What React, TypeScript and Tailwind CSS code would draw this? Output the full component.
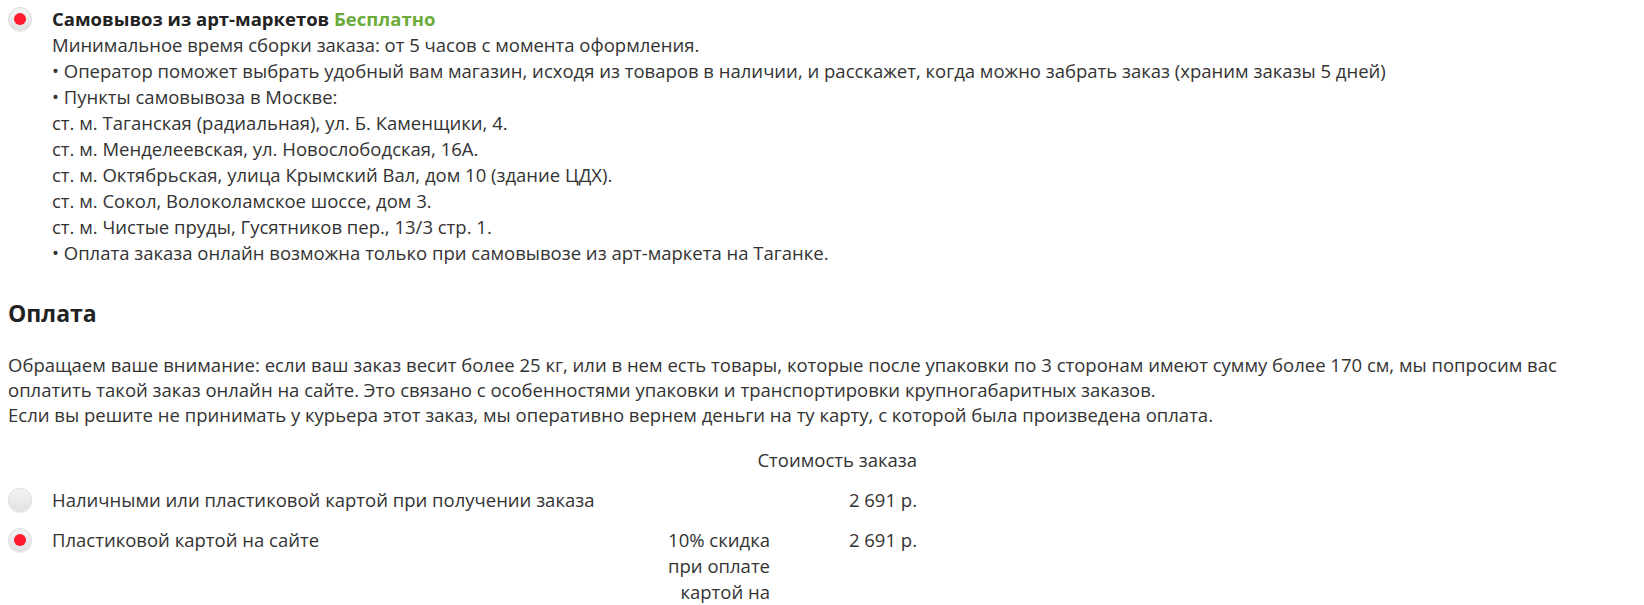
import React from "react";

const PICKUP_LINES = [
  "Минимальное время сборки заказа: от 5 часов с момента оформления.",
  "• Оператор поможет выбрать удобный вам магазин, исходя из товаров в наличии, и расскажет, когда можно забрать заказ (храним заказы 5 дней)",
  "• Пункты самовывоза в Москве:",
  "ст. м. Таганская (радиальная), ул. Б. Каменщики, 4.",
  "ст. м. Менделеевская, ул. Новослободская, 16А.",
  "ст. м. Октябрьская, улица Крымский Вал, дом 10 (здание ЦДХ).",
  "ст. м. Сокол, Волоколамское шоссе, дом 3.",
  "ст. м. Чистые пруды, Гусятников пер., 13/3 стр. 1.",
  "• Оплата заказа онлайн возможна только при самовывозе из арт-маркета на Таганке.",
];

function Radio({ checked }: { checked?: boolean }) {
  return (
    <span className="flex h-6 w-6 shrink-0 items-center justify-center rounded-full border border-[#dcdcdc] bg-gradient-to-b from-[#f4f4f4] to-[#e2e2e2] shadow-[0_1px_1px_rgba(0,0,0,0.08)]">
      {checked && <span className="h-3 w-3 rounded-full bg-[#ff1a2d]" />}
    </span>
  );
}

export default function App() {
  return (
    <div className="min-h-[605px] bg-white text-[18.5px] leading-[26px] text-[#333] font-['Open_Sans','Lato',sans-serif]">
      <div className="flex pl-2 pt-[6px]">
        <div className="w-[44px] shrink-0 pt-px">
          <Radio checked />
        </div>
        <div>
          <div className="font-bold text-[#222]">
            Самовывоз из арт-маркетов <span className="text-[#6aab3c]">Бесплатно</span>
          </div>
          {PICKUP_LINES.map((l) => (
            <div key={l}>{l}</div>
          ))}
        </div>
      </div>

      <div className="pl-2 pr-4 pt-[32px]">
        <h2 className="text-[23px] font-bold leading-[30px] text-[#222]">Оплата</h2>
        <p className="mt-[24px] leading-[25px]">
          Обращаем ваше внимание: если ваш заказ весит более 25 кг, или в нем есть товары, которые после упаковки по 3 сторонам имеют сумму более 170 см, мы попросим вас оплатить такой заказ онлайн на сайте. Это связано с особенностями упаковки и транспортировки крупногабаритных заказов.
          <br />
          Если вы решите не принимать у курьера этот заказ, мы оперативно вернем деньги на ту карту, с которой была произведена оплата.
        </p>

        <div className="mt-[13px] w-[909px]">
          <div className="py-[7px] text-right whitespace-nowrap">Стоимость заказа</div>
          <div className="flex items-start py-[7px]">
            <div className="w-[44px] shrink-0 pt-px">
              <Radio />
            </div>
            <div className="w-[614px] shrink-0">Наличными или пластиковой картой при получении заказа</div>
            <div className="w-[104px] shrink-0" />
            <div className="w-[147px] shrink-0 text-right">2 691 р.</div>
          </div>
          <div className="flex items-start py-[7px]">
            <div className="w-[44px] shrink-0 pt-px">
              <Radio checked />
            </div>
            <div className="w-[614px] shrink-0">Пластиковой картой на сайте</div>
            <div className="w-[104px] shrink-0 text-right">10% скидка при оплате картой на сайте</div>
            <div className="w-[147px] shrink-0 text-right">2 691 р.</div>
          </div>
        </div>
      </div>
    </div>
  );
}
